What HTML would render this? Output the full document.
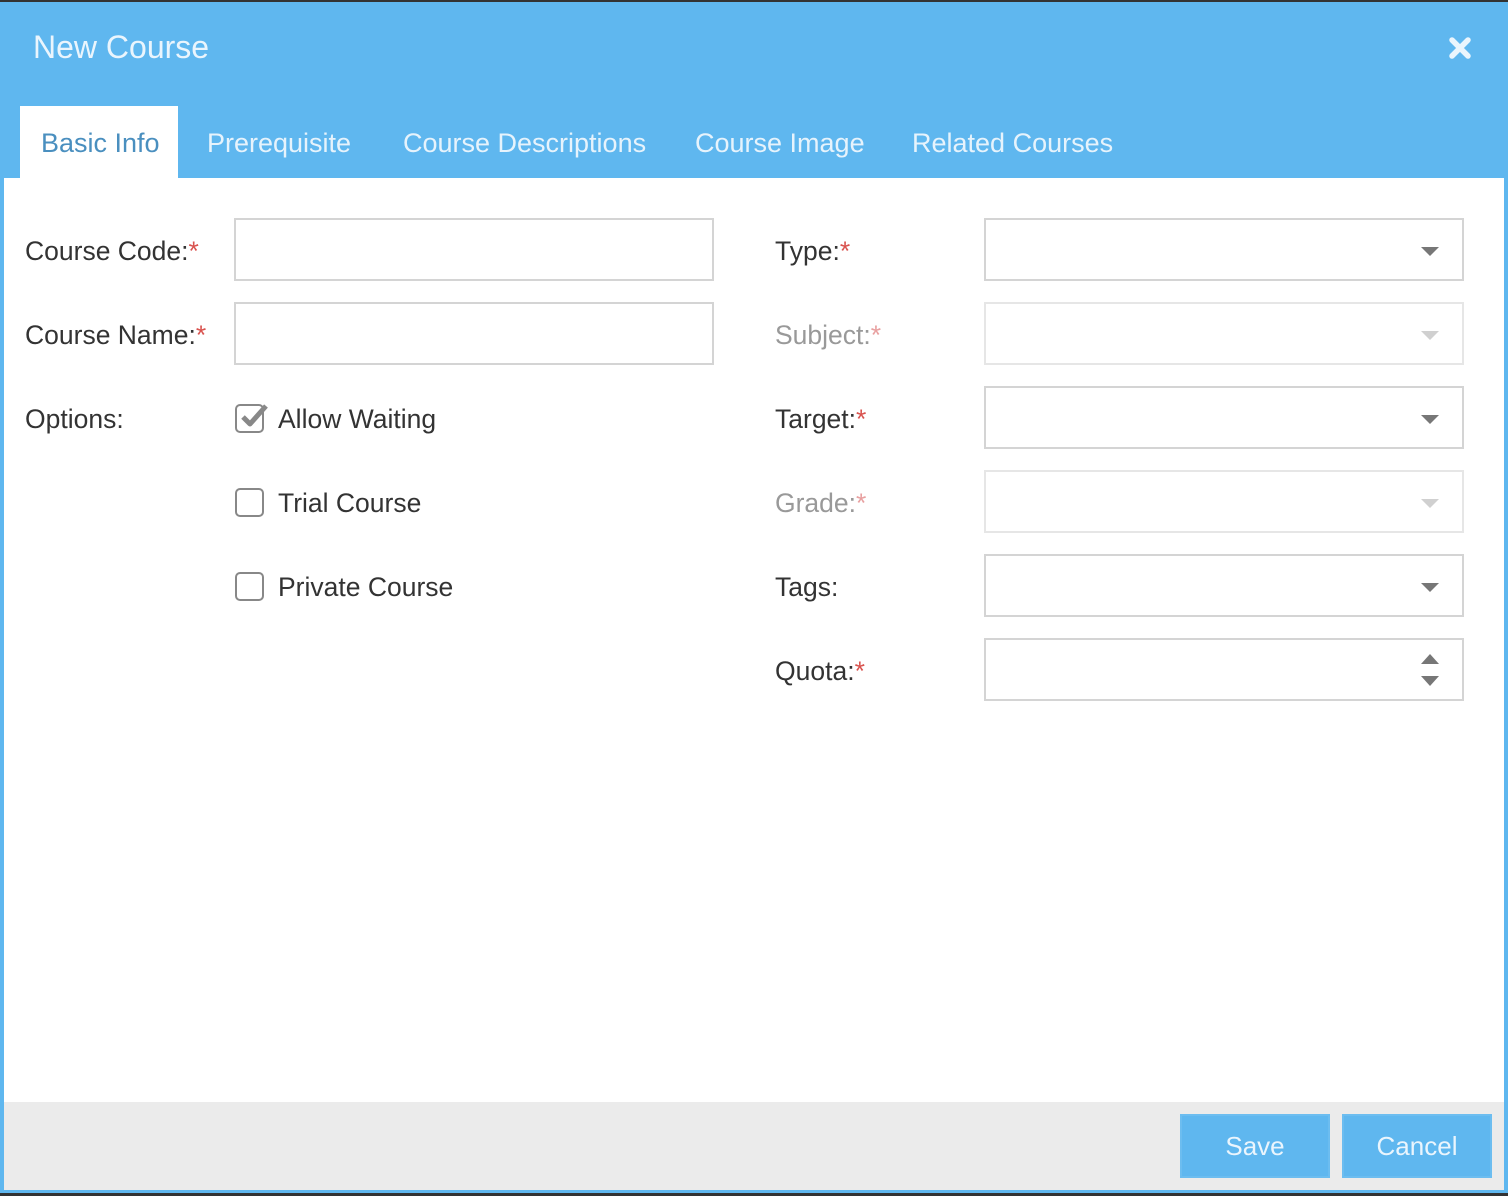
<!DOCTYPE html>
<html><head><style>
*{box-sizing:border-box;margin:0;padding:0}
body{width:1508px;height:1196px;background:#333;font-family:"Liberation Sans",sans-serif;position:relative;overflow:hidden}
.frame{position:absolute;left:0;top:2px;width:1508px;height:1191px;background:#5fb7ef}
.hdr{position:absolute;left:33px;top:29px;font-size:32px;color:#eaf5fd}
.x{position:absolute;left:1448px;top:36px}
.tab{position:absolute;top:128px;font-size:27px;color:#e6f3fc}
.active{position:absolute;left:20px;top:106px;width:158px;height:74px;background:#fff}
.body{position:absolute;left:4px;top:178px;width:1500px;height:924px;background:#fff}
.foot{position:absolute;left:4px;top:1102px;width:1500px;height:88px;background:#ebebeb}
.lbl{position:absolute;font-size:26.5px;color:#333}
.dis{color:#999}
.star{color:#d9534f}
.dis .star{color:#e8a0a0}
.in{position:absolute;height:63px;border:2px solid #d4d4d4;background:#fff}
.arr{position:absolute;right:23px;top:27px;width:0;height:0;border-left:9px solid transparent;border-right:9px solid transparent;border-top:9px solid #777}
.dd.dis2 .arr{border-top-color:#d0d0d0}
.dd.dis2{border-color:#e6e6e6}
.cb{position:absolute;left:235px;width:29px;height:29px;border:2px solid #888;border-radius:5px}
.btn{position:absolute;top:1114px;width:150px;height:64px;background:#5fb7ef;border:2px solid #6cbdf0;color:#eaf5fd;font-size:26px;text-align:center;line-height:60px}
</style></head><body>
<div class="frame"></div>
<div class="hdr">New Course</div>
<svg class="x" width="24" height="24" viewBox="0 0 24 24"><path d="M4 4L20 20M20 4L4 20" stroke="#eaf5fd" stroke-width="5.5" stroke-linecap="round"/></svg>
<div class="active"></div>
<div class="tab" style="left:41px;color:#4a8fbf">Basic Info</div>
<div class="tab" style="left:207px">Prerequisite</div>
<div class="tab" style="left:403px">Course Descriptions</div>
<div class="tab" style="left:695px">Course Image</div>
<div class="tab" style="left:912px">Related Courses</div>
<div class="body"></div>
<div class="foot"></div>

<div class="lbl" style="left:25px;top:236px">Course Code:<span class="star">*</span></div>
<div class="lbl" style="left:25px;top:320px">Course Name:<span class="star">*</span></div>
<div class="lbl" style="left:25px;top:404px">Options:</div>
<div class="in" style="left:234px;top:218px;width:480px"></div>
<div class="in" style="left:234px;top:302px;width:480px"></div>

<div class="cb" style="top:404px"></div>
<svg style="position:absolute;left:238px;top:401px" width="32" height="30" viewBox="0 0 32 30"><path d="M5 16L12 23L28 5" fill="none" stroke="#888" stroke-width="5" stroke-linejoin="round"/></svg>
<div class="lbl" style="left:278px;top:404px">Allow Waiting</div>
<div class="cb" style="top:488px"></div>
<div class="lbl" style="left:278px;top:488px">Trial Course</div>
<div class="cb" style="top:572px"></div>
<div class="lbl" style="left:278px;top:572px">Private Course</div>

<div class="lbl" style="left:775px;top:236px">Type:<span class="star">*</span></div>
<div class="lbl dis" style="left:775px;top:320px">Subject:<span class="star">*</span></div>
<div class="lbl" style="left:775px;top:404px">Target:<span class="star">*</span></div>
<div class="lbl dis" style="left:775px;top:488px">Grade:<span class="star">*</span></div>
<div class="lbl" style="left:775px;top:572px">Tags:</div>
<div class="lbl" style="left:775px;top:656px">Quota:<span class="star">*</span></div>

<div class="in dd" style="left:984px;top:218px;width:480px"><div class="arr"></div></div>
<div class="in dd dis2" style="left:984px;top:302px;width:480px"><div class="arr"></div></div>
<div class="in dd" style="left:984px;top:386px;width:480px"><div class="arr"></div></div>
<div class="in dd dis2" style="left:984px;top:470px;width:480px"><div class="arr"></div></div>
<div class="in dd" style="left:984px;top:554px;width:480px"><div class="arr"></div></div>
<div class="in" style="left:984px;top:638px;width:480px">
<div style="position:absolute;right:23px;top:14px;border-left:9px solid transparent;border-right:9px solid transparent;border-bottom:10px solid #777"></div>
<div style="position:absolute;right:23px;top:36px;border-left:9px solid transparent;border-right:9px solid transparent;border-top:10px solid #777"></div>
</div>

<div class="btn" style="left:1180px">Save</div>
<div class="btn" style="left:1342px">Cancel</div>
</body></html>
